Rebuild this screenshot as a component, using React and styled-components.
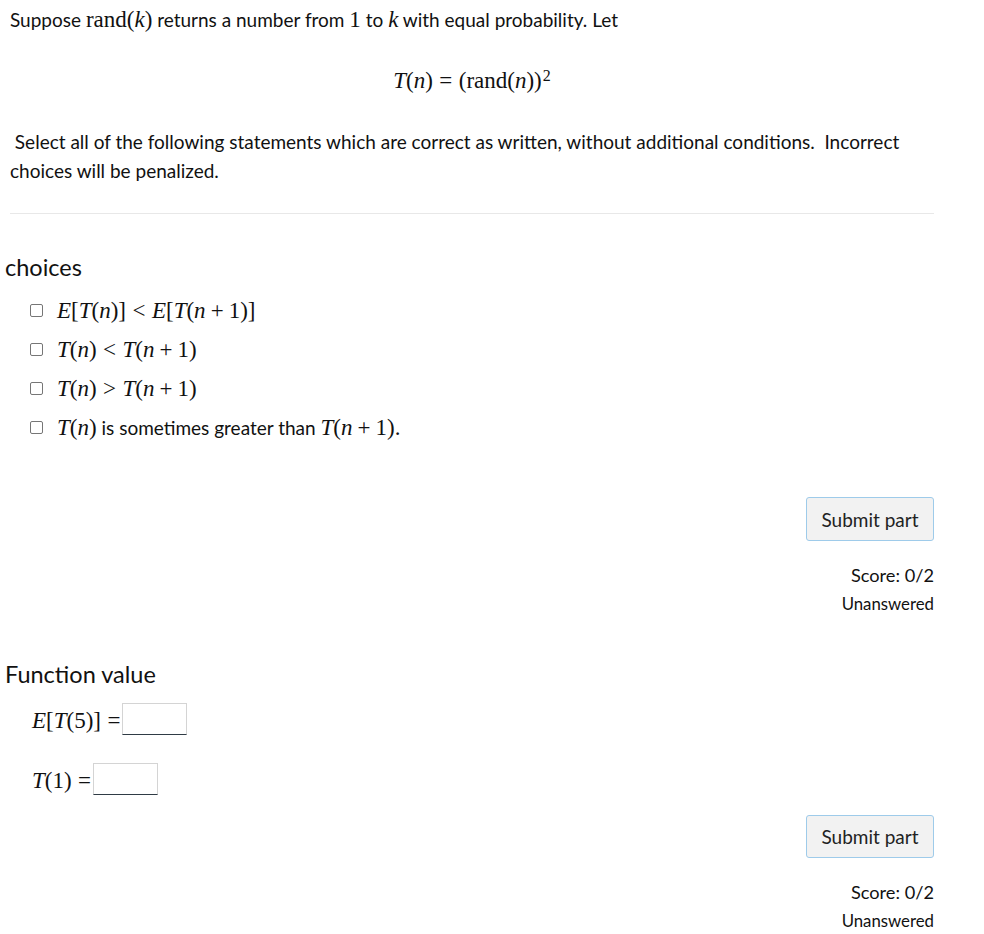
import React from "react";
import styled, { createGlobalStyle } from "styled-components";

const Global = createGlobalStyle`
  html, body { margin: 0; padding: 0; background: #fff; }
  body { font-family: "Lato", "Noto Sans", sans-serif; color: #111; }
`;

const Page = styled.div`
  width: 929px;
  padding: 0 0 0 5px;
  box-sizing: content-box;
`;

const Prompt = styled.div`
  padding-left: 5px;
  font-size: 19px;
`;

const Line = styled.p`
  margin: 0;
  padding-top: ${(p) => p.$top || 0}px;
  line-height: 29px;
`;

const Display = styled.div`
  text-align: center;
  margin: 32px 0 31px;
  line-height: 30px;
`;

const M = styled.span`
  font-family: "Liberation Serif", "Times New Roman", serif;
  font-size: ${(p) => p.$size || 23}px;
  font-style: ${(p) => (p.$i ? "italic" : "normal")};
`;

const Op = styled(M)`
  margin: 0 ${(p) => (p.$bin ? 0.22 : 0.28)}em;
`;

const Sup = styled.sup`
  font-family: "Liberation Serif", serif;
  font-size: 16px;
  line-height: 0;
  margin-left: 1px;
`;

const Rule = styled.hr`
  border: 0;
  border-top: 1px solid #e8e8e8;
  margin: 28px 0 0 5px;
`;

const Heading = styled.h3`
  margin: ${(p) => p.$top}px 0 0;
  font-weight: 400;
  font-size: 23.5px;
  line-height: 30px;
`;

const ChoiceList = styled.div`
  display: flex;
  flex-direction: column;
  gap: 10px;
  padding-left: 25px;
  margin-top: 14px;
`;

const Choice = styled.label`
  display: flex;
  align-items: center;
  gap: 14px;
  height: 29px;
  font-size: 19px;
`;

const Box = styled.span`
  width: 11px;
  height: 11px;
  border: 1px solid #767676;
  border-radius: 2px;
  flex: none;
`;

const Controls = styled.div`
  display: flex;
  flex-direction: column;
  align-items: flex-end;
  margin-top: ${(p) => p.$top}px;
`;

const Button = styled.button`
  font-family: inherit;
  font-size: 19px;
  color: #222;
  background: #f2f2f2;
  border: 1px solid #9ecbea;
  border-radius: 3px;
  width: 128px;
  height: ${(p) => p.$h || 44}px;
  padding: 0;
`;

const Score = styled.div`
  margin-top: 22px;
  font-size: 18.2px;
  line-height: 24px;
`;

const Status = styled.div`
  margin-top: 6px;
  font-size: 16.8px;
  line-height: 22px;
`;

const FieldRow = styled.div`
  display: flex;
  align-items: flex-end;
  padding-left: ${(p) => p.$pad}px;
  margin-top: ${(p) => p.$top}px;
`;

const Input = styled.span`
  display: inline-block;
  width: 63px;
  height: 30px;
  border: 1px solid #d4d4d4;
  border-bottom: 1px solid #2f3b45;
  margin-left: 2px;
`;

const Label = styled.span`
  padding-bottom: 1px;
`;

const Rel = ({ children, tight }) => (
  <Op style={tight ? { marginRight: 0 } : undefined}>{children}</Op>
);
const Bin = ({ children }) => <Op $bin>{children}</Op>;

export default function App() {
  return (
    <Page>
      <Global />
      <Prompt>
        <Line $top={5}>
          Suppose <M>rand</M>
          <M>(</M>
          <M $i>k</M>
          <M>)</M> returns a number from <M>1</M> to <M $i>k</M> with equal probability. Let
        </Line>
        <Display>
          <M $i>T</M>
          <M>(</M>
          <M $i>n</M>
          <M>)</M>
          <Rel>=</Rel>
          <M>(rand(</M>
          <M $i>n</M>
          <M>))</M>
          <Sup>2</Sup>
        </Display>
        <Line>&nbsp;Select all of the following statements which are correct as written, without additional conditions.&nbsp; Incorrect choices will be penalized.</Line>
      </Prompt>
      <Rule />
      <Heading $top={38}>choices</Heading>
      <ChoiceList>
        <Choice>
          <Box />
          <span>
            <M $i>E</M><M>[</M><M $i>T</M><M>(</M><M $i>n</M><M>)]</M>
            <Rel>&lt;</Rel>
            <M $i>E</M><M>[</M><M $i>T</M><M>(</M><M $i>n</M>
            <Bin>+</Bin>
            <M>1)]</M>
          </span>
        </Choice>
        <Choice>
          <Box />
          <span>
            <M $i>T</M><M>(</M><M $i>n</M><M>)</M>
            <Rel>&lt;</Rel>
            <M $i>T</M><M>(</M><M $i>n</M>
            <Bin>+</Bin>
            <M>1)</M>
          </span>
        </Choice>
        <Choice>
          <Box />
          <span>
            <M $i>T</M><M>(</M><M $i>n</M><M>)</M>
            <Rel>&gt;</Rel>
            <M $i>T</M><M>(</M><M $i>n</M>
            <Bin>+</Bin>
            <M>1)</M>
          </span>
        </Choice>
        <Choice>
          <Box />
          <span>
            <M $i>T</M><M>(</M><M $i>n</M><M>)</M> is sometimes greater than <M $i>T</M><M>(</M><M $i>n</M>
            <Bin>+</Bin>
            <M>1).</M>
          </span>
        </Choice>
      </ChoiceList>
      <Controls $top={55}>
        <Button>Submit part</Button>
        <Score>Score: 0/2</Score>
        <Status>Unanswered</Status>
      </Controls>
      <Heading $top={44}>Function value</Heading>
      <FieldRow $pad={27} $top={14}>
        <Label>
          <M $i>E</M><M>[</M><M $i>T</M><M>(5)]</M>
          <Rel tight>=</Rel>
        </Label>
        <Input />
      </FieldRow>
      <FieldRow $pad={27} $top={28}>
        <Label>
          <M $i>T</M><M>(1)</M>
          <Rel tight>=</Rel>
        </Label>
        <Input />
      </FieldRow>
      <Controls $top={20}>
        <Button $h={43}>Submit part</Button>
        <Score>Score: 0/2</Score>
        <Status>Unanswered</Status>
      </Controls>
    </Page>
  );
}
